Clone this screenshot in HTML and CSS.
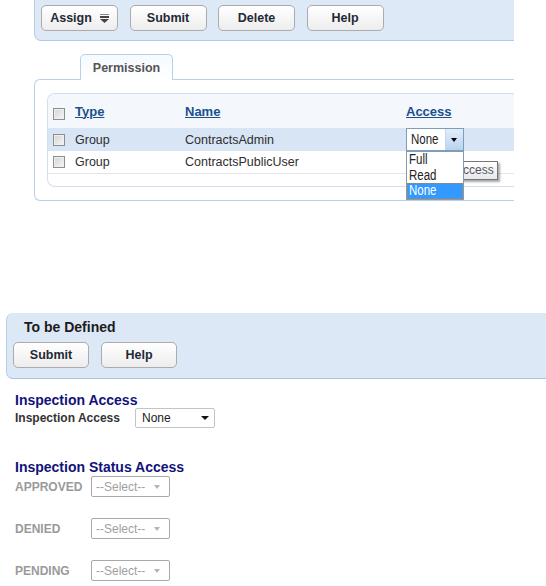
FILE: index.html
```html
<!DOCTYPE html>
<html>
<head>
<meta charset="utf-8">
<link rel="stylesheet" href="styles.css">
</head>
<body>
<div class="toolbar">
  <button class="btn btn-assign">Assign
    <svg class="menu-ico" width="9" height="9" viewBox="0 0 9 9"><rect x="0" y="0" width="9" height="1" fill="#8a8a8a"/><rect x="0" y="2" width="9" height="2" fill="#444"/><path d="M0 5 L9 5 L4.5 9 Z" fill="#444"/></svg>
  </button>
  <button class="btn">Submit</button>
  <button class="btn">Delete</button>
  <button class="btn">Help</button>
</div>

<div class="tabset">
  <div class="tabs"><div class="tab">Permission</div></div>
  <div class="tabpanel">
    <div class="grid">
      <div class="row head">
        <span class="cbcell"><span class="cb"></span></span>
        <a class="hlink">Type</a>
        <a class="hlink">Name</a>
        <a class="hlink">Access</a>
      </div>
      <div class="row sel">
        <span class="cbcell"><span class="cb"></span></span>
        <span>Group</span>
        <span>ContractsAdmin</span>
        <span class="acc">
          <span class="xpselect"><span class="xpval"><span class="narrow">None</span></span><span class="xparrow"></span></span>
          <span class="tip">Access</span>
          <span class="droplist">
            <span class="opt"><span class="narrow">Full</span></span>
            <span class="opt"><span class="narrow">Read</span></span>
            <span class="opt on"><span class="narrow">None</span></span>
          </span>
        </span>
      </div>
      <div class="row last">
        <span class="cbcell"><span class="cb"></span></span>
        <span>Group</span>
        <span>ContractsPublicUser</span>
        <span></span>
      </div>
      <div class="spacer"></div>
    </div>
  </div>
</div>

<div class="formpanel">
  <div class="ptitle">To be Defined</div>
  <div class="pbtns">
    <button class="btn btn-b">Submit</button>
    <button class="btn btn-b">Help</button>
  </div>
</div>

<div class="form">
  <div class="sect">Inspection Access</div>
  <div class="frow">
    <span class="flabel wide">Inspection Access</span>
    <span class="fselect"><span>None</span><span class="farrow"></span></span>
  </div>
  <div class="sect sect2">Inspection Status Access</div>
  <div class="srow first">
    <span class="flabel dis">APPROVED</span>
    <span class="fselect disabled"><span>--Select--</span><span class="farrow"></span></span>
  </div>
  <div class="srow">
    <span class="flabel dis">DENIED</span>
    <span class="fselect disabled"><span>--Select--</span><span class="farrow"></span></span>
  </div>
  <div class="srow">
    <span class="flabel dis">PENDING</span>
    <span class="fselect disabled"><span>--Select--</span><span class="farrow"></span></span>
  </div>
</div>
</body>
</html>
```

FILE: styles.css
```css
* { box-sizing: border-box; }
html, body { margin: 0; padding: 0; background: #fff; }
body {
  font-family: "Liberation Sans", Arial, sans-serif;
  width: 546px;
  height: 586px;
  overflow: hidden;
  color: #333;
}

/* top toolbar */
.toolbar {
  margin-left: 34px;
  width: 480px;
  display: flex;
  gap: 11.5px;
  padding: 5px 0 9px 6px;
  background: #dde9f6;
  border-left: 1px solid #b7cde6;
  border-bottom: 1px solid #b1c9e4;
  border-bottom-left-radius: 7px;
}
.btn {
  height: 26px;
  width: 77px;
  padding: 0;
  border: 1px solid #ababab;
  border-radius: 5px;
  background: linear-gradient(#ffffff, #ededed);
  font-family: "Liberation Sans", Arial, sans-serif;
  font-weight: bold;
  font-size: 12.5px;
  color: #1f2a36;
  display: inline-flex;
  align-items: center;
  justify-content: center;
  gap: 8px;
}
.menu-ico { display: block; margin-top: 1px; }

/* tabs */
.tabset { margin: 13px 0 0 34px; width: 480px; }
.tabs { display: flex; padding-left: 46px; }
.tab {
  position: relative;
  z-index: 1;
  width: 93px;
  height: 26px;
  margin-bottom: -1px;
  border: 1px solid #b8d0ea;
  border-bottom: none;
  border-radius: 5px 5px 0 0;
  background: linear-gradient(#f6fafe, #ffffff);
  font-weight: bold;
  font-size: 12.5px;
  color: #555;
  display: flex;
  align-items: center;
  justify-content: center;
  padding-top: 1px;
}
.tabpanel {
  border: 1px solid #b8d0ea;
  border-right: none;
  border-radius: 6px 0 0 6px;
  padding: 13px 0 13px 12px;
  background: #fff;
}
.grid {
  border: 1px solid #d3dfec;
  border-right: none;
  border-radius: 8px 0 0 8px;
}
.row {
  display: grid;
  grid-template-columns: 27px 110px 221px 1fr;
  align-items: center;
  font-size: 12.5px;
  color: #2e2e2e;
}
.row.head { height: 34px; background: #f4f8fc; border-top-left-radius: 7px; }
.row.sel { height: 23px; background: #d7e5f4; }
.row.last { height: 23px; border-bottom: 1px solid #e2e6ea; }
.spacer { height: 12px; }
.cbcell { padding-left: 5px; display: flex; }
.head .cbcell { padding-top: 5px; }
.cb {
  width: 12px;
  height: 12px;
  border: 1px solid #8e8e8e;
  background: linear-gradient(135deg, #d3d3d3, #f6f6f6);
  box-shadow: inset 0 0 0 1px #efefef;
}
.hlink {
  font-weight: bold;
  font-size: 13px;
  color: #1b4f8e;
  text-decoration: underline;
}

/* access select with open list */
.acc { position: relative; height: 23px; }
.xpselect {
  position: relative;
  z-index: 2;
  display: flex;
  width: 58px;
  height: 23px;
  border: 1px solid #7f9db9;
  background: #fff;
}
.xpval, .opt {
  font-family: "Liberation Sans", Arial, sans-serif;
  font-size: 14px;
  color: #222;
  overflow: hidden;
  white-space: nowrap;
}
.narrow {
  display: inline-block;
  transform: scaleX(0.82);
  transform-origin: left center;
}
.xpval { flex: 1; padding-left: 4px; line-height: 21px; }
.xparrow {
  width: 18px;
  border-left: 1px solid #c5d7ec;
  background: linear-gradient(#e3eefa, #b8d3ef);
  position: relative;
}
.xparrow::after {
  content: "";
  position: absolute;
  left: 5px;
  top: 9px;
  border-left: 3.5px solid transparent;
  border-right: 3.5px solid transparent;
  border-top: 4px solid #000;
}
.droplist {
  position: absolute;
  z-index: 3;
  left: 0;
  top: 23px;
  width: 58px;
  border: 1px solid #7f9db9;
  background: #fff;
  display: flex;
  flex-direction: column;
}
.opt { height: 15.5px; line-height: 15px; padding-left: 2px; }
.opt.on {
  background: #3399ff;
  color: #fff;
  outline: 1px dotted #c8802a;
  outline-offset: -1px;
}
.tip {
  position: absolute;
  z-index: 1;
  left: 45px;
  top: 33px;
  width: 47px;
  height: 19px;
  border: 1px solid #767676;
  background: linear-gradient(#ffffff, #e6e7ef);
  box-shadow: 2px 2px 2px rgba(0, 0, 0, 0.35);
  font-size: 12px;
  color: #575757;
  line-height: 17px;
  padding-left: 3px;
}

/* lower panel */
.formpanel {
  margin: 112px 0 0 6px;
  background: #dce8f5;
  border-left: 1px solid #b7cde6;
  border-bottom: 1px solid #a9c3e0;
  border-radius: 7px 0 0 7px;
  padding: 6px 0 10px 6px;
}
.ptitle {
  margin-left: 11px;
  font-weight: bold;
  font-size: 14px;
  line-height: 16px;
  color: #1c1c1c;
}
.pbtns { margin-top: 7px; display: flex; gap: 12px; }
.btn-b { width: 76px; }

/* form */
.form { padding-left: 15px; }
.sect {
  margin-top: 13px;
  font-weight: bold;
  font-size: 14px;
  line-height: 16px;
  color: #12127a;
}
.sect2 { margin-top: 31px; }
.frow, .srow { display: flex; align-items: center; }
.frow { height: 20px; }
.srow { height: 21px; margin-top: 21px; }
.srow.first { margin-top: 1px; }
.flabel { font-weight: bold; font-size: 12px; color: #333; width: 76px; }
.flabel.wide { width: 120px; }
.flabel.dis { color: #9a9a9a; }
.fselect {
  width: 80px;
  height: 20px;
  border: 1px solid #c4c4c4;
  border-radius: 2px;
  display: flex;
  align-items: center;
  justify-content: space-between;
  padding: 0 5px 0 6px;
  font-size: 12px;
  color: #222;
  background: #fff;
}
.farrow {
  width: 0;
  height: 0;
  border-left: 4px solid transparent;
  border-right: 4px solid transparent;
  border-top: 4px solid #111;
}
.fselect.disabled {
  width: 79px;
  height: 21px;
  border-color: #a9a9a9;
  color: #a0a0a0;
  padding: 0 9px 0 4px;
}
.fselect.disabled .farrow {
  border-left-width: 3.5px;
  border-right-width: 3.5px;
  border-top-color: #b4b4b4;
}
```
